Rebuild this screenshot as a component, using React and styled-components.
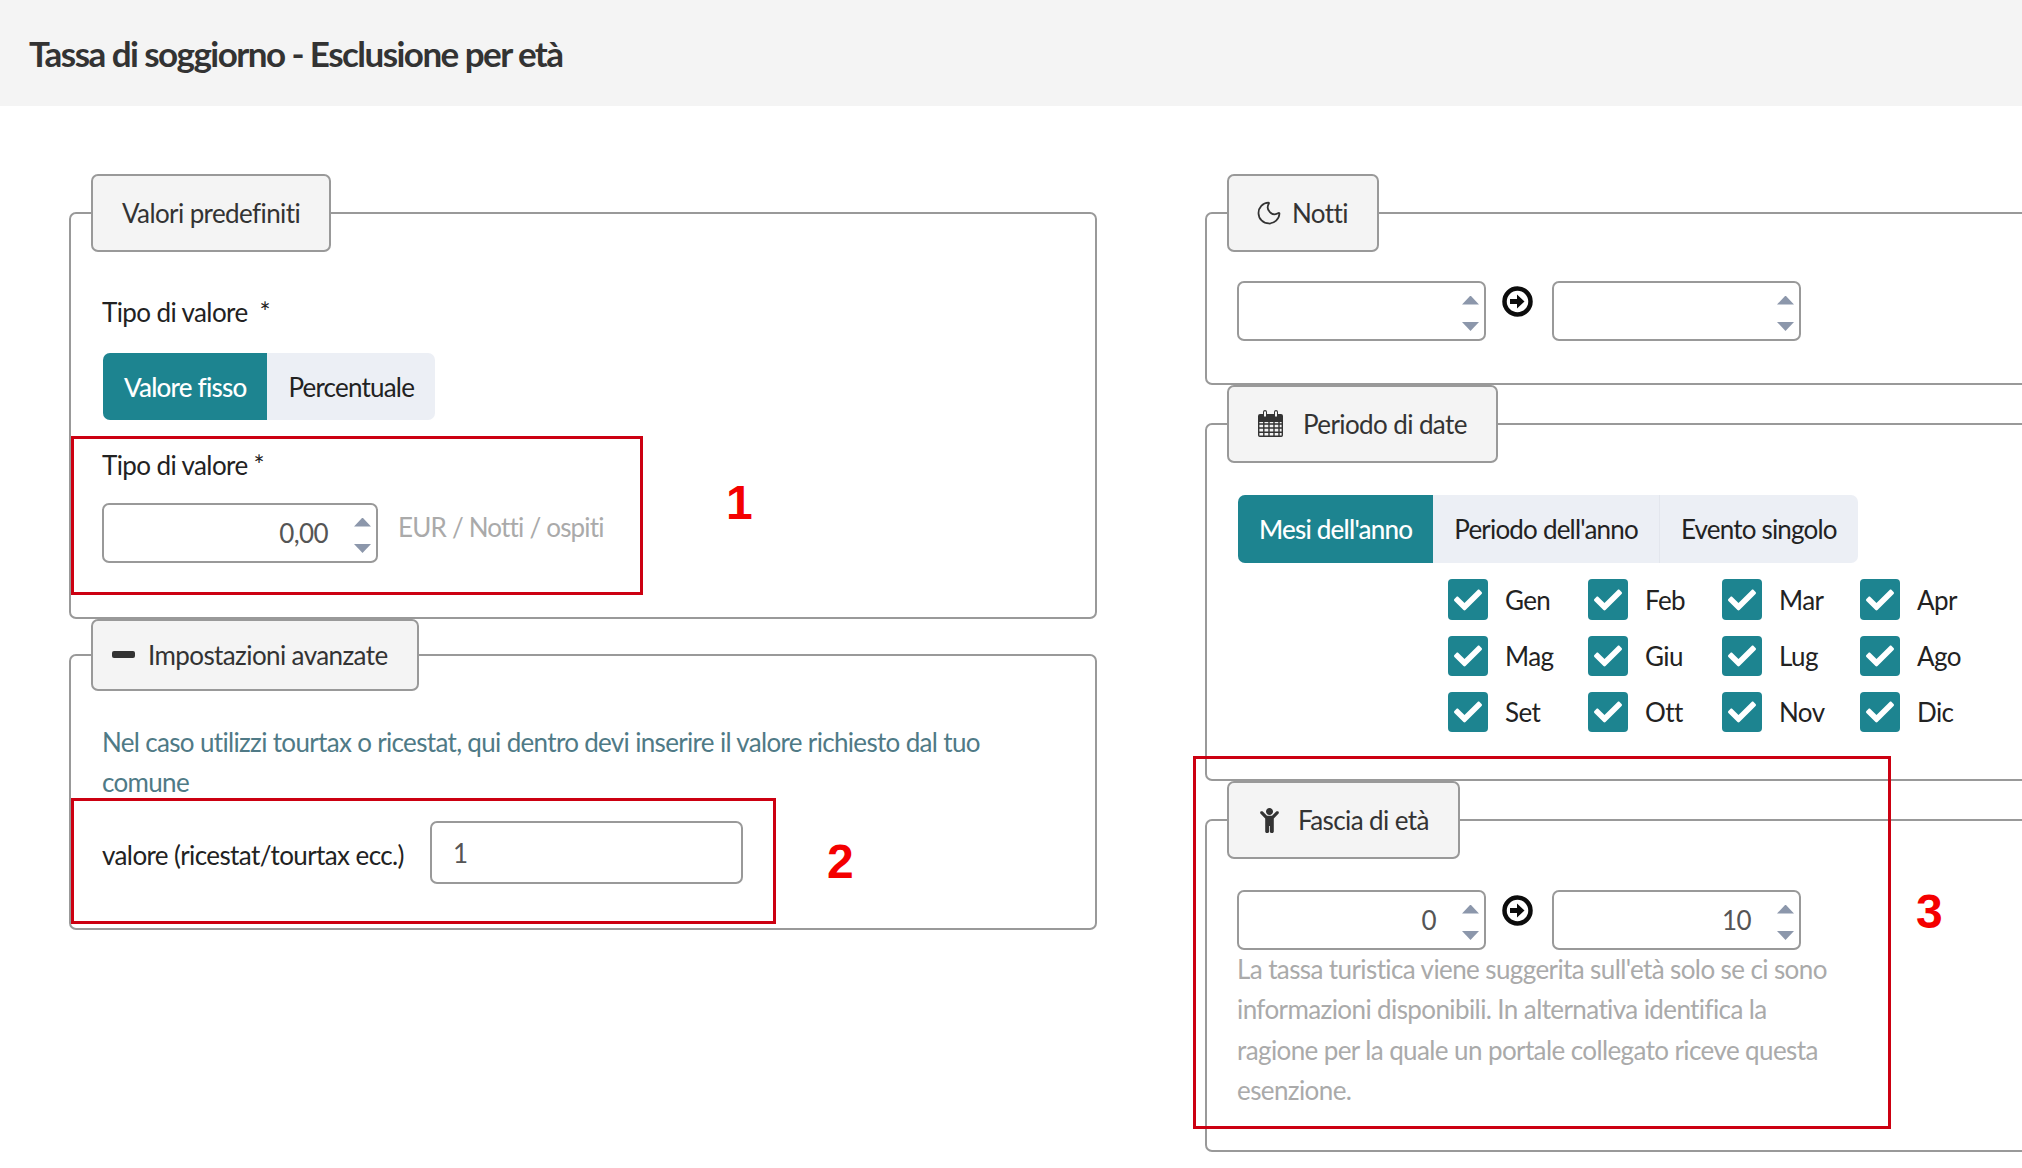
import React from 'react';
import styled, {createGlobalStyle} from 'styled-components';
import {FaCheck, FaChild} from 'react-icons/fa';
import {Moon} from 'lucide-react';

const GlobalStyle = createGlobalStyle`
  html, body {
    margin: 0;
    padding: 0;
    background: #fff;
  }
  body {
    font-family: "Lato", "Roboto", sans-serif;
    font-size: 26px;
    letter-spacing: -0.6px;
    color: #333;
  }
  * {
    box-sizing: border-box;
  }
`;

const Page = styled.div`
  position: relative;
  width: 2022px;
  height: 1168px;
  overflow: hidden;
`;

const Header = styled.header`
  height: 106px;
  padding-left: 29px;
  display: flex;
  align-items: center;
  background: #f4f4f4;
`;

const Title = styled.h1`
  margin: 0;
  font-size: 35px;
  font-weight: 700;
  letter-spacing: -1.55px;
  color: #333;
`;

const Columns = styled.div`
  display: grid;
  grid-template-columns: 1028px 900px;
  column-gap: 108px;
  padding: 68px 0 0 69px;
`;

const Column = styled.div`
  display: flex;
  flex-direction: column;
  align-items: stretch;
`;

const Panel = styled.fieldset`
  margin: 0;
  padding: ${p => p.$pad};
  min-width: 0;
  border: 2px solid #999;
  border-radius: 7px;
`;

const PanelTitle = styled.legend`
  display: flex;
  align-items: center;
  gap: ${p => p.$gap || 0}px;
  height: ${p => p.$height || 78}px;
  margin-left: ${p => p.$shift || -10}px;
  padding: 0 29px 0 ${p => p.$left || 29}px;
  background: #f4f4f4;
  border: 2px solid #999;
  border-radius: 7px;
  color: #333;
  svg {
    flex: none;
  }
`;

const Label = styled.div`
  height: 40px;
  line-height: 40px;
  padding-top: ${p => p.$nudge || 0}px;
  color: #222;
  white-space: pre;
`;

const Tabs = styled.div`
  display: inline-flex;
  align-self: flex-start;
  width: max-content;
  height: ${p => p.$height}px;
  margin-left: 1px;
  border-radius: 7px;
  overflow: hidden;
  background: #eceff5;
`;

const Tab = styled.div`
  display: flex;
  align-items: center;
  padding: 0 21px;
  letter-spacing: -0.8px;
  color: ${p => (p.$active ? '#fff' : '#222')};
  background: ${p => (p.$active ? '#1d8490' : 'transparent')};
  border-left: ${p => (p.$divided ? '1px solid #e3e6ed' : '0')};
  font-weight: ${p => (p.$active ? 500 : 400)};
`;

const Row = styled.div`
  display: flex;
  align-items: ${p => p.$align || 'center'};
  margin-top: ${p => p.$top || 0}px;
`;

const InputBox = styled.div`
  display: flex;
  align-items: center;
  justify-content: ${p => (p.$left ? 'flex-start' : 'flex-end')};
  flex: none;
  width: ${p => p.$width || 249}px;
  height: ${p => p.$height || 60}px;
  margin-left: ${p => p.$gap || 0}px;
  padding: 0 5px 0 ${p => (p.$left ? 21 : 7)}px;
  border: 2px solid #999;
  border-radius: 7px;
  color: #555;
`;

const Spinner = styled.div`
  flex: none;
  display: flex;
  flex-direction: column;
  gap: 17px;
  margin-left: 26px;
  padding-top: 4px;
  i {
    display: block;
    width: 17px;
    height: 9px;
    background: #8c97ab;
    clip-path: polygon(50% 0, 100% 100%, 0 100%);
  }
  i + i {
    transform: scaleY(-1);
  }
`;

const Hint = styled.span`
  margin: 0 0 12px 20px;
  letter-spacing: -0.8px;
  color: #aaa;
`;

const Arrow = styled.div`
  display: flex;
  width: 31px;
  margin: 5px 19px 0 16px;
`;

const Minus = styled.span`
  flex: none;
  width: 23px;
  height: 7px;
  margin-bottom: 2px;
  border-radius: 2px;
  background: #333;
`;

const Note = styled.p`
  margin: ${p => p.$top}px 0 0;
  line-height: ${p => p.$line || 40}px;
  letter-spacing: ${p => p.$spacing || -0.6}px;
  color: ${p => p.$color};
`;

const MonthGrid = styled.div`
  display: grid;
  grid-template-columns: 140px 134px 138px auto;
  grid-template-rows: 41px 40px 40px;
  row-gap: 16px;
  margin: 16px 0 0 211px;
`;

const Month = styled.div`
  display: flex;
  align-items: center;
  gap: 17px;
  color: #222;
`;

const Check = styled.span`
  display: flex;
  align-items: center;
  justify-content: center;
  width: 40px;
  height: 100%;
  border-radius: 4px;
  background: #1d8490;
  color: #fff;
`;

const Callout = styled.div`
  position: absolute;
  left: ${p => p.$x}px;
  top: ${p => p.$y}px;
  width: ${p => p.$w}px;
  height: ${p => p.$h}px;
  border: 3px solid #cc0011;
`;

const CalloutNumber = styled.span`
  position: absolute;
  left: ${p => p.$x}px;
  top: ${p => p.$y}px;
  font-family: "Liberation Sans", sans-serif;
  font-size: 48px;
  font-weight: 700;
  line-height: 48px;
  letter-spacing: 0;
  color: #f40000;
`;

const CalendarIcon = () => (
  <svg width="27" height="28" viewBox="0 0 27 28">
    <path fill="#333" d="M1 6a2 2 0 0 1 2-2h3V2a2 2 0 0 1 4 0v2h7V2a2 2 0 0 1 4 0v2h3a2 2 0 0 1 2 2v6H1z" />
    <path fill="#f4f4f4" d="M7 1.500h2v5H7zM18 1.500h2v5h-2z" />
    <path
      fill="none"
      stroke="#333"
      strokeWidth="1.400"
      d="M1.700 10v15.300a1 1 0 0 0 1 1h21.600a1 1 0 0 0 1-1V10M1.700 14h23.600M1.700 18h23.600M1.700 22.200h23.600M6.800 10v16M12 10v16M17 10v16M22 10v16"
    />
  </svg>
);

const ArrowIcon = () => (
  <svg width="31" height="31" viewBox="0 0 31 31">
    <circle cx="15.500" cy="15.500" r="13" fill="none" stroke="#0c0c0c" strokeWidth="4.500" />
    <path fill="#0c0c0c" d="M8 13h7V8.500l7.500 7-7.500 7V18H8z" />
  </svg>
);

const Spin = () => (
  <Spinner>
    <i />
    <i />
  </Spinner>
);

const RangeRow = ({from, to}) => (
  <Row $align="flex-start">
    <InputBox>
      {from}
      <Spin />
    </InputBox>
    <Arrow>
      <ArrowIcon />
    </Arrow>
    <InputBox>
      {to}
      <Spin />
    </InputBox>
  </Row>
);

const MONTHS = ['Gen', 'Feb', 'Mar', 'Apr', 'Mag', 'Giu', 'Lug', 'Ago', 'Set', 'Ott', 'Nov', 'Dic'];

export default function App() {
  return (
    <Page>
      <GlobalStyle />
      <Header>
        <Title>Tassa di soggiorno - Esclusione per età</Title>
      </Header>
      <Columns>
        <Column>
          <Panel $pad="40px 30px 54px 31px">
            <PanelTitle $shift={-11}>Valori predefiniti</PanelTitle>
            <Label>Tipo di valore  *</Label>
            <Row $top={21}>
              <Tabs $height={67}>
                <Tab $active>Valore fisso</Tab>
                <Tab>Percentuale</Tab>
              </Tabs>
            </Row>
            <Row $top={25}>
              <Label>Tipo di valore *</Label>
            </Row>
            <Row $top={18}>
              <InputBox $width={276}>
                0,00
                <Spin />
              </InputBox>
              <Hint>EUR / Notti / ospiti</Hint>
            </Row>
          </Panel>
          <Panel $pad="31px 30px 44px 31px">
            <PanelTitle $shift={-11} $height={72} $left={19} $gap={13}>
              <Minus />
              Impostazioni avanzate
            </PanelTitle>
            <Note $top={0} $spacing={-0.67} $color="#4f7a86">
              Nel caso utilizzi tourtax o ricestat, qui dentro devi inserire il valore richiesto dal tuo
              <br />
              comune
            </Note>
            <Row $top={19}>
              <Label $nudge={2}>valore (ricestat/tourtax ecc.)</Label>
              <InputBox $left $width={313} $height={63} $gap={26}>
                1
              </InputBox>
            </Row>
          </Panel>
        </Column>
        <Column>
          <Panel $pad="29px 30px 42px">
            <PanelTitle $left={26} $gap={9}>
              <Moon size={28} color="#333" strokeWidth={1.5} />
              Notti
            </PanelTitle>
            <RangeRow />
          </Panel>
          <Panel $pad="32px 30px 47px">
            <PanelTitle $left={28} $gap={19}>
              <CalendarIcon />
              Periodo di date
            </PanelTitle>
            <Tabs $height={68}>
              <Tab $active>Mesi dell'anno</Tab>
              <Tab>Periodo dell'anno</Tab>
              <Tab $divided>Evento singolo</Tab>
            </Tabs>
            <MonthGrid>
              {MONTHS.map(month => (
                <Month key={month}>
                  <Check>
                    <FaCheck size={28} />
                  </Check>
                  {month}
                </Month>
              ))}
            </MonthGrid>
          </Panel>
          <Panel $pad="31px 30px 40px">
            <PanelTitle $left={28} $gap={16}>
              <FaChild size={25} color="#333" />
              Fascia di età
            </PanelTitle>
            <RangeRow from="0" to="10" />
            <Note $top={-1} $line={40.3} $color="#aaa">
              La tassa turistica viene suggerita sull'età solo se ci sono
              <br />
              informazioni disponibili. In alternativa identifica la
              <br />
              ragione per la quale un portale collegato riceve questa
              <br />
              esenzione.
            </Note>
          </Panel>
        </Column>
      </Columns>

      <Callout $x={71} $y={436} $w={572} $h={159} />
      <CalloutNumber $x={726} $y={479}>1</CalloutNumber>
      <Callout $x={71} $y={798} $w={705} $h={126} />
      <CalloutNumber $x={827} $y={838}>2</CalloutNumber>
      <Callout $x={1193} $y={756} $w={698} $h={373} />
      <CalloutNumber $x={1916} $y={888}>3</CalloutNumber>
    </Page>
  );
}
